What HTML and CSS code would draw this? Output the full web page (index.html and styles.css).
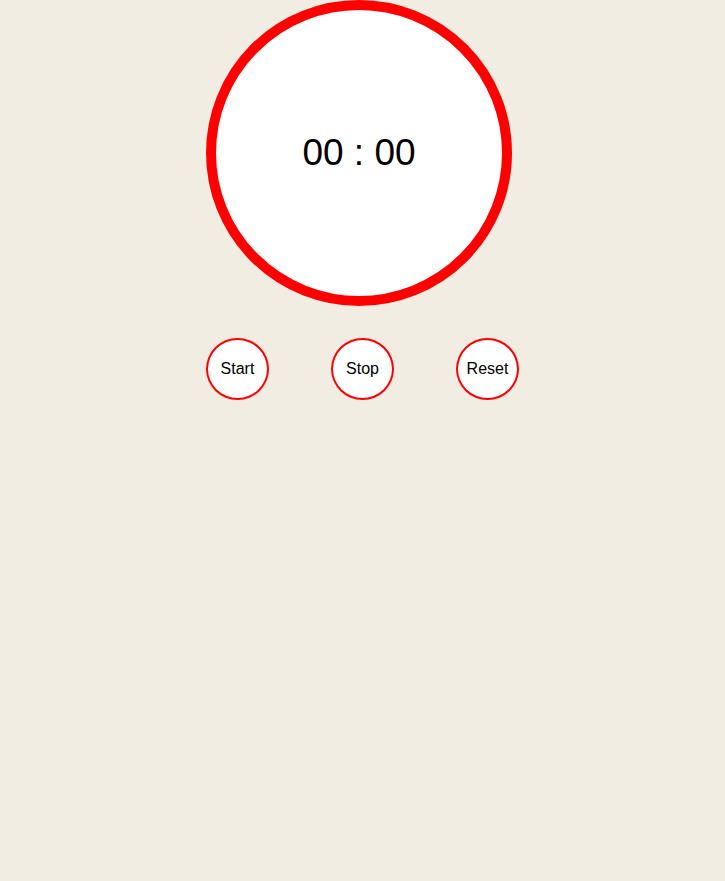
FILE: index.html
```html
<!DOCTYPE html>
<html>
<head>
<meta charset="utf-8">
<link rel="stylesheet" href="styles.css">
</head>
<body>
<div class="timer">
  <div class="dial"><span class="time">00 : 00</span></div>
  <div class="controls">
    <button class="btn">Start</button>
    <button class="btn">Stop</button>
    <button class="btn">Reset</button>
  </div>
</div>
</body>
</html>
```
FILE: styles.css
```css
html, body {
  margin: 0;
  padding: 0;
  background: #f2ede3;
  font-family: "Liberation Sans", Arial, sans-serif;
}
.timer {
  width: 313px;
  margin: 0 auto;
  display: flex;
  flex-direction: column;
}
.dial {
  width: 286px;
  height: 286px;
  border: 10px solid #ff0000;
  border-radius: 50%;
  background: #ffffff;
  display: flex;
  align-items: center;
  justify-content: center;
}
.time {
  font-size: 37px;
  color: #000;
}
.controls {
  margin-top: 32px;
  display: flex;
  gap: 62px;
}
.btn {
  width: 63px;
  height: 62px;
  box-sizing: border-box;
  border: 2px solid #ff0000;
  border-radius: 50%;
  background: #ffffff;
  color: #000;
  font-family: "Liberation Sans", Arial, sans-serif;
  font-size: 16px;
  padding: 0;
}
```
